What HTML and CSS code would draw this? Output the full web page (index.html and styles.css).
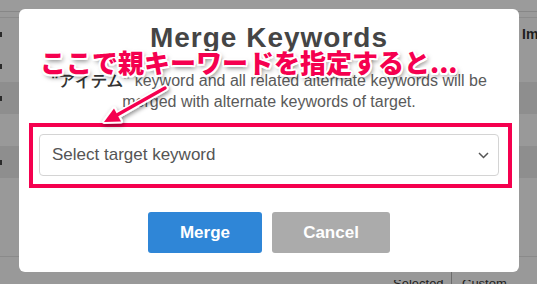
FILE: index.html
```html
<!DOCTYPE html>
<html>
<head>
<meta charset="utf-8">
<link rel="stylesheet" href="styles.css">
</head>
<body>
<div class="bg">
  <div class="bg-top"></div>
  <div class="bg-sub"></div>
  <div class="row head"><span class="mark"></span><span class="spacer"></span><span class="col-im">Im</span></div>
  <div class="row"><span class="mark"></span></div>
  <div class="row dark"><span class="mark"></span></div>
  <div class="row"></div>
  <div class="row dark"><span class="mark"></span></div>
  <div class="bg-fill"></div>
  <div class="bg-foot"><span class="spacer"></span><span class="foot-a">Selected</span><span class="foot-sep"></span><span class="foot-b">Custom</span></div>
</div>

<div class="modal">
  <h1 class="title">Merge Keywords</h1>
  <p class="desc"><strong>"アイテム"</strong> keyword and all related alternate keywords will be merged with alternate keywords of target.</p>
  <div class="select">
    <span class="select-text">Select target keyword</span>
    <svg class="chev" width="11" height="7" viewBox="0 0 11 7"><polyline points="1,1 5.5,5.5 10,1" fill="none" stroke="#555" stroke-width="1.5"/></svg>
  </div>
  <div class="actions">
    <button class="btn btn-merge">Merge</button>
    <button class="btn btn-cancel">Cancel</button>
  </div>
</div>

<div class="note-box"></div>
<div class="note-text">ここで親キーワードを指定すると...</div>
<svg class="note-arrow" width="537" height="284" viewBox="0 0 537 284">
  <defs>
    <filter id="sh" x="-50%" y="-50%" width="200%" height="200%">
      <feDropShadow dx="1" dy="2" stdDeviation="2" flood-color="#000" flood-opacity="0.45"/>
    </filter>
  </defs>
  <g filter="url(#sh)">
    <line x1="165" y1="88" x2="118" y2="115" stroke="#fff" stroke-width="7" stroke-linecap="round"/>
    <polygon points="104,122 121,121.5 114,108.5" fill="#fff" stroke="#fff" stroke-width="4" stroke-linejoin="round"/>
    <line x1="165" y1="88" x2="117" y2="115" stroke="#f5004f" stroke-width="3.5" stroke-linecap="round"/>
    <polygon points="104,122 121,121.5 114,108.5" fill="#f5004f"/>
  </g>
</svg>
</body>
</html>
```

FILE: styles.css
```css
html, body {
  margin: 0;
  padding: 0;
}
body {
  width: 537px;
  height: 284px;
  overflow: hidden;
  background: #999999;
  font-family: "Liberation Sans", Arial, sans-serif;
  position: relative;
}
.bg {
  display: flex;
  flex-direction: column;
  height: 284px;
}
.bg-top {
  height: 11px;
  background: #9b9b9b;
  border-bottom: 1px solid #878787;
}
.bg-sub {
  height: 5px;
  background: #9a9a9a;
  border-bottom: 1px solid #8c8c8c;
}
.row {
  height: 32px;
  background: #999999;
  display: flex;
  align-items: center;
}
.row.dark {
  background: #8e8e8e;
}
.mark {
  width: 2px;
  height: 5px;
  background: #2a2a2a;
}
.spacer {
  flex: 1;
}
.col-im {
  width: 15px;
  font-weight: bold;
  font-size: 14px;
  color: #1e1e1e;
  overflow: hidden;
  white-space: nowrap;
}
.bg-fill {
  flex: 1;
  border-bottom: 1px solid #8a8a8a;
}
.bg-foot {
  height: 27px;
  display: flex;
  align-items: flex-end;
  font-size: 13px;
  color: #222;
}
.foot-a {
  width: 58px;
  line-height: 8px;
  height: 4px;
  overflow: hidden;
}
.foot-sep {
  width: 1px;
  height: 12px;
  background: #6d6d6d;
  margin-right: 10px;
}
.foot-b {
  width: 75px;
  line-height: 8px;
  height: 4px;
  overflow: hidden;
}

.modal {
  position: absolute;
  left: 19px;
  top: 9px;
  width: 500px;
  height: 263px;
  box-sizing: border-box;
  background: #ffffff;
  border-radius: 6px;
  padding: 13px 20px 0;
  display: flex;
  flex-direction: column;
}
.title {
  margin: 0;
  text-align: center;
  font-size: 28px;
  line-height: 32px;
  font-weight: bold;
  letter-spacing: 1px;
  color: #454545;
}
.desc {
  margin: 16px 0 0;
  text-align: center;
  font-size: 16px;
  line-height: 21px;
  color: #5a5a5a;
  padding: 0 4px;
}
.desc strong {
  color: #333;
}
.select {
  margin-top: 22px;
  height: 42px;
  box-sizing: border-box;
  border: 1px solid #d4d4d4;
  border-radius: 4px;
  display: flex;
  align-items: center;
  justify-content: space-between;
  padding: 0 9px 0 12px;
}
.select-text {
  font-size: 17px;
  color: #555;
}
.chev {
  display: block;
}
.actions {
  margin-top: 36px;
  display: flex;
  justify-content: center;
  gap: 10px;
}
.btn {
  height: 41px;
  border: none;
  border-radius: 3px;
  color: #fff;
  font-family: "Liberation Sans", Arial, sans-serif;
  font-weight: bold;
  font-size: 17px;
  padding: 0;
}
.btn-merge {
  width: 114px;
  background: #2f86d7;
}
.btn-cancel {
  width: 118px;
  background: #ababab;
}

.note-box {
  position: absolute;
  left: 29px;
  top: 123px;
  width: 483px;
  height: 65px;
  box-sizing: border-box;
  border: 4px solid #f5004f;
}
.note-text {
  position: absolute;
  left: 40px;
  top: 48px;
  font-family: "Noto Sans CJK JP", sans-serif;
  font-weight: 900;
  font-size: 26px;
  line-height: 28px;
  color: #f5004f;
  white-space: nowrap;
  text-shadow:
    2px 0 0 #fff, -2px 0 0 #fff, 0 2px 0 #fff, 0 -2px 0 #fff,
    1.5px 1.5px 0 #fff, -1.5px -1.5px 0 #fff, 1.5px -1.5px 0 #fff, -1.5px 1.5px 0 #fff,
    2px 3px 5px rgba(0,0,0,0.55);
}
.note-arrow {
  position: absolute;
  left: 0;
  top: 0;
}
```
